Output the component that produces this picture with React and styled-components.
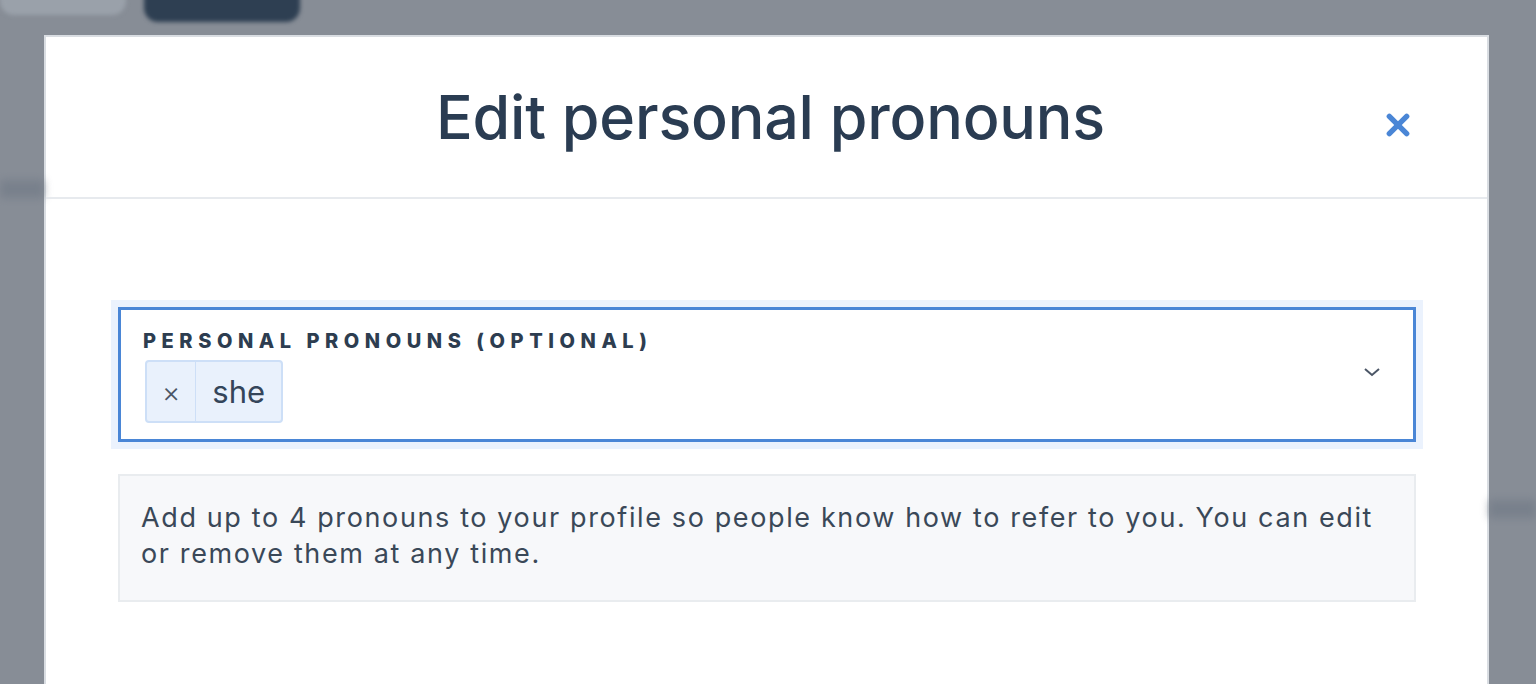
import React from 'react';
import styled, {createGlobalStyle} from "styled-components";

const Global = createGlobalStyle`
    *, *::before, *::after {
        box-sizing: border-box;
    }
    html, body {
        margin: 0;
        padding: 0;
        height: 100%;
        overflow: hidden;
        background: #878d96;
        font-family: Inter, "Liberation Sans", sans-serif;
    }
    #root {
        height: 100%;
    }
`

const Backdrop = styled.div`
    height: 100%;
    background: #878d96;
    display: flex;
    flex-direction: column;
    overflow: hidden;
`

const BlurBar = styled.div`
    height: 35px;
    flex: none;
    display: flex;
    align-items: flex-end;
    gap: 18px;
    filter: blur(2px);
`

const Pill = styled.div`
    width: ${p => p.w}px;
    height: ${p => p.h}px;
    margin-bottom: ${p => p.mb}px;
    background: ${p => p.dark ? "#2e3f52" : "#9aa1aa"};
    border-radius: 0 0 14px 14px;
`

const Row = styled.div`
    flex: 1;
    display: flex;
    min-height: 0;
`

const Side = styled.div`
    flex: ${p => p.w ? "none" : "1"};
    width: ${p => p.w ? p.w + "px" : "auto"};
    display: flex;
    flex-direction: column;
    padding-top: ${p => p.pt}px;
`

const Smudge = styled.div`
    height: 18px;
    width: 100%;
    background: #6f7885;
    filter: blur(4px);
    opacity: 0.6;
`

const Modal = styled.div`
    width: 1445px;
    flex: none;
    background: #fff;
    border: 2px solid #d9dde2;
    border-bottom: none;
    display: flex;
    flex-direction: column;
`

const Header = styled.div`
    height: 162px;
    display: flex;
    align-items: center;
    justify-content: center;
    border-bottom: 2px solid #e7eaee;
    position: relative;
`

const Title = styled.h1`
    margin: 0 0 0 8px;
    font-size: 61px;
    font-weight: 500;
    color: #2a3c52;
    letter-spacing: -0.2px;
`

const Close = styled.button`
    position: absolute;
    right: 75px;
    top: 74px;
    width: 28px;
    height: 28px;
    padding: 0;
    border: none;
    background: none;
    display: flex;
    align-items: center;
    justify-content: center;
`

const Body = styled.div`
    padding: 108px 71px 0 72px;
    display: flex;
    flex-direction: column;
    gap: 32px;
`

const Select = styled.div`
    height: 135px;
    border: 3px solid #4a86d6;
    box-shadow: 0 0 0 7px #ebf2fd;
    display: flex;
    align-items: flex-start;
    padding: 21px 32px 0 22px;
`

const Field = styled.div`
    flex: 1;
    display: flex;
    flex-direction: column;
    gap: 9px;
`

const Label = styled.div`
    font-size: 20px;
    font-weight: 800;
    letter-spacing: 5.55px;
    color: #2d3d50;
    line-height: 20px;
`

const Tag = styled.div`
    display: flex;
    align-self: flex-start;
    height: 63px;
    margin-left: 2px;
    border: 2px solid #cddff7;
    border-radius: 4px;
    background: #e9f1fc;
`

const TagPart = styled.span`
    display: flex;
    align-items: center;
    justify-content: center;
    padding: 0 ${p => p.px}px;
    font-size: ${p => p.size}px;
    font-weight: ${p => p.muted ? 300 : 400};
    color: ${p => p.muted ? "#4b5666" : "#34455a"};
    border-left: ${p => p.divider ? "1.5px solid #cddff7" : "none"};
`

const Chevron = styled.div`
    margin-top: 35px;
    display: flex;
`

const Help = styled.div`
    border: 2px solid #e9ecef;
    background: #f7f8fa;
    padding: 24px 30px 28px 21px;
    font-size: 27px;
    letter-spacing: 1.62px;
    line-height: 36px;
    color: #3a4858;
`

const App = () => {
    return (
        <Backdrop>
            <Global/>
            <BlurBar>
                <Pill w={126} h={40} mb={20} />
                <Pill dark w={156} h={40} mb={13} />
            </BlurBar>
            <Row>
                <Side w={44} pt={145}><Smudge /></Side>
                <Modal>
                    <Header>
                        <Title>Edit personal pronouns</Title>
                        <Close aria-label="close">
                            <svg width="26" height="26" viewBox="0 0 24 24">
                                <path d="M4 4 L20 20 M20 4 L4 20" stroke="#4a86d6" strokeWidth="5" strokeLinecap="round"/>
                            </svg>
                        </Close>
                    </Header>
                    <Body>
                        <Select>
                            <Field>
                                <Label>PERSONAL PRONOUNS (OPTIONAL)</Label>
                                <Tag>
                                    <TagPart muted px={15} size={28}>×</TagPart>
                                    <TagPart divider px={16} size={31}>she</TagPart>
                                </Tag>
                            </Field>
                            <Chevron>
                                <svg width="18" height="12" viewBox="0 0 18 12">
                                    <path d="M2 3 L9 9 L16 3" fill="none" stroke="#4b5666" strokeWidth="2" />
                                </svg>
                            </Chevron>
                        </Select>
                        <Help>
                            Add up to 4 pronouns to your profile so people know how to refer to you. You can edit or remove them at any time.
                        </Help>
                    </Body>
                </Modal>
                <Side pt={465}><Smudge /></Side>
            </Row>
        </Backdrop>
    );
};

export default App;
